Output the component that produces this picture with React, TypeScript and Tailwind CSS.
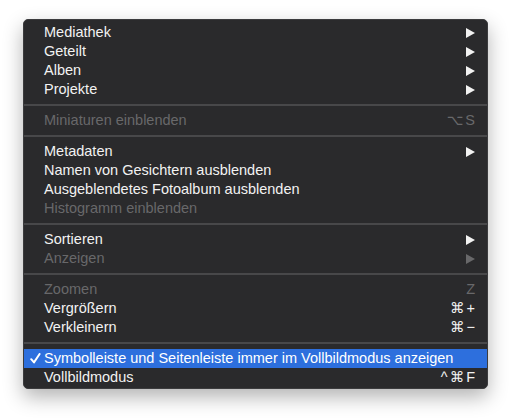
import React from 'react';

type Item =
  | { kind: 'sep' }
  | { kind: 'item'; label: string; disabled?: boolean; sub?: boolean; shortcut?: string; checked?: boolean; active?: boolean };

const ITEMS: Item[] = [
  { kind: 'item', label: 'Mediathek', sub: true },
  { kind: 'item', label: 'Geteilt', sub: true },
  { kind: 'item', label: 'Alben', sub: true },
  { kind: 'item', label: 'Projekte', sub: true },
  { kind: 'sep' },
  { kind: 'item', label: 'Miniaturen einblenden', disabled: true, shortcut: '⌥S' },
  { kind: 'sep' },
  { kind: 'item', label: 'Metadaten', sub: true },
  { kind: 'item', label: 'Namen von Gesichtern ausblenden' },
  { kind: 'item', label: 'Ausgeblendetes Fotoalbum ausblenden' },
  { kind: 'item', label: 'Histogramm einblenden', disabled: true },
  { kind: 'sep' },
  { kind: 'item', label: 'Sortieren', sub: true },
  { kind: 'item', label: 'Anzeigen', sub: true, disabled: true },
  { kind: 'sep' },
  { kind: 'item', label: 'Zoomen', disabled: true, shortcut: 'Z' },
  { kind: 'item', label: 'Vergrößern', shortcut: '⌘+' },
  { kind: 'item', label: 'Verkleinern', shortcut: '⌘−' },
  { kind: 'sep' },
  { kind: 'item', label: 'Symbolleiste und Seitenleiste immer im Vollbildmodus anzeigen', checked: true, active: true },
  { kind: 'item', label: 'Vollbildmodus', shortcut: '^⌘F' },
];

function Arrow() {
  return (
    <svg width="9" height="10" viewBox="0 0 9 10" className="fill-current">
      <polygon points="0,0 9,5 0,10" />
    </svg>
  );
}

function Check() {
  return (
    <svg width="11" height="11" viewBox="0 0 11 11" className="absolute left-[6px] top-[4px]">
      <path d="M1.2 6.2 L4 9.4 L9.6 1" fill="none" stroke="white" strokeWidth="2" strokeLinecap="round" strokeLinejoin="round" />
    </svg>
  );
}

export default function App() {
  return (
    <div className="min-h-[418px] w-[511px] bg-white pl-[23px] pt-[19px] font-['Liberation_Sans','DejaVu_Sans',sans-serif]">
      <div className="w-[465px] overflow-hidden rounded-[5px] border border-[#3c3c3e] bg-[#2a2a2c] pb-[1px] pt-[3px] shadow-[0_8px_20px_rgba(0,0,0,0.3)]">
        {ITEMS.map((it, i) =>
          it.kind === 'sep' ? (
            <div key={i} className="my-[5px] h-[2px] bg-[#48484a]" />
          ) : (
            <div
              key={i}
              className={`relative flex h-[19px] items-center pl-[20px] pr-[12px] text-[14.5px] leading-none ${
                it.active ? 'bg-[#2d6fdd] text-white' : it.disabled ? 'text-[#68686a]' : 'text-[#f2f2f2]'
              }`}
            >
              {it.checked && <Check />}
              <span className="flex-1">{it.label}</span>
              {it.sub && <Arrow />}
              {it.shortcut && <span className="tracking-[2px] -mr-[2px]">{it.shortcut}</span>}
            </div>
          ),
        )}
      </div>
    </div>
  );
}
